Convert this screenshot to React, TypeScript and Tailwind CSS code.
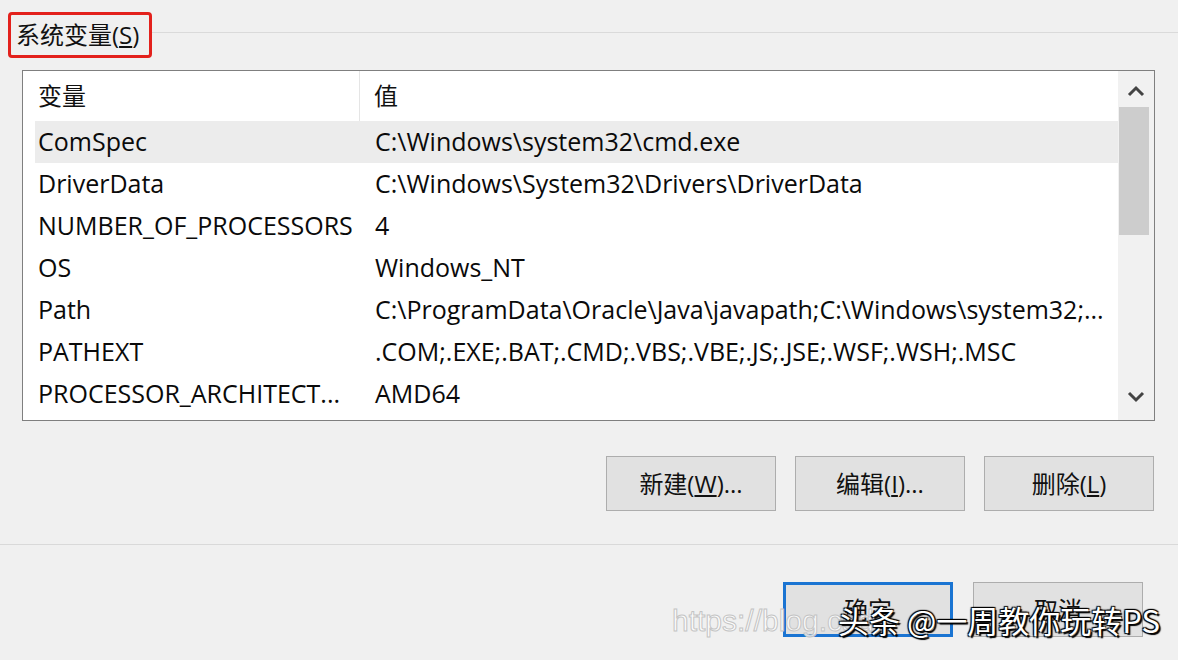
import React from "react";

const rows = [
  { name: "ComSpec", value: "C:\\Windows\\system32\\cmd.exe" },
  { name: "DriverData", value: "C:\\Windows\\System32\\Drivers\\DriverData" },
  { name: "NUMBER_OF_PROCESSORS", value: "4" },
  { name: "OS", value: "Windows_NT" },
  { name: "Path", value: "C:\\ProgramData\\Oracle\\Java\\javapath;C:\\Windows\\system32;..." },
  { name: "PATHEXT", value: ".COM;.EXE;.BAT;.CMD;.VBS;.VBE;.JS;.JSE;.WSF;.WSH;.MSC" },
  { name: "PROCESSOR_ARCHITECT...", value: "AMD64" },
];

const font = "font-['Open_Sans','Noto_Sans_CJK_SC',sans-serif]";

function Chevron({ up }: { up?: boolean }) {
  return (
    <svg width="18" height="12" viewBox="0 0 18 12" className="text-[#444]">
      <path
        d={up ? "M2 10 L9 3 L16 10" : "M2 2 L9 9 L16 2"}
        fill="none"
        stroke="currentColor"
        strokeWidth="3"
      />
    </svg>
  );
}

function Button({ label, primary }: { label: React.ReactNode; primary?: boolean }) {
  return (
    <div
      className={
        "w-[170px] h-[55px] flex items-center justify-center bg-[#e1e1e1] text-[24px] text-[#111] " +
        (primary ? "border-[3px] border-[#1a74d2]" : "border border-[#adadad]")
      }
    >
      {label}
    </div>
  );
}

export default function App() {
  return (
    <div className={`relative w-[1178px] h-[660px] overflow-hidden bg-[#f0f0f0] ${font}`}>
      {/* group header */}
      <div className="flex items-center pt-[12px] pl-[8px]">
        <div className="w-[144px] h-[46px] border-[3px] border-[#e3211c] rounded-[4px] flex items-center pl-[5px] text-[24px] text-[#111] leading-none">
          系统变量(<span className="underline underline-offset-2">S</span>)
        </div>
        <div className="flex-1 h-px bg-[#dadada] -mt-[6px]" />
      </div>

      {/* list view */}
      <div className="ml-[22px] mt-[12px] w-[1133px] h-[351px] border border-[#7f7f7f] bg-white flex">
        <div className="flex-1 flex flex-col">
          <div className="h-[50px] flex items-center text-[24px] text-[#111]">
            <div className="w-[337px] pl-[15px] h-full flex items-center border-r border-[#e5e5e5]">变量</div>
            <div className="pl-[14px]">值</div>
          </div>
          {rows.map((r, i) => (
            <div
              key={r.name}
              className={
                "ml-[12px] h-[42px] flex items-center text-[25px] text-[#0a0a0a] whitespace-nowrap " +
                (i === 0 ? "bg-[#ececec]" : "")
              }
            >
              <div className="w-[340px] pl-[3px]">{r.name}</div>
              <div>{r.value}</div>
            </div>
          ))}
        </div>
        <div className="w-[36px] bg-[#f1f1f1] flex flex-col items-center">
          <div className="h-[36px] flex items-center justify-center pt-[4px]">
            <Chevron up />
          </div>
          <div className="w-[30px] h-[128px] bg-[#cdcdcd] -ml-[4px]" />
          <div className="flex-1" />
          <div className="h-[40px] flex items-center justify-center pb-[6px]">
            <Chevron />
          </div>
        </div>
      </div>

      {/* action buttons */}
      <div className="mt-[35px] pr-[24px] flex justify-end gap-[19px]">
        <Button label={<>新建(<span className="underline">W</span>)...</>} />
        <Button label={<>编辑(<span className="underline">I</span>)...</>} />
        <Button label={<>删除(<span className="underline">L</span>)</>} />
      </div>

      <div className="mt-[33px] h-px bg-[#d9d9d9]" />

      <div className="mt-[37px] pr-[35px] flex justify-end gap-[20px]">
        <Button primary label="确定" />
        <Button label="取消" />
      </div>

      {/* watermarks */}
      <div className="absolute left-[672px] top-[606px] text-[30px] leading-none text-white/80 [-webkit-text-stroke:1px_#c4c4c4] font-['Liberation_Sans',sans-serif] whitespace-nowrap">
        https://blog.csdn
      </div>
      <div className="absolute left-[838px] top-[604px] text-[31px] leading-none text-white font-['Noto_Sans_CJK_SC',sans-serif] whitespace-nowrap [text-shadow:2px_2px_1px_#000,-1px_-1px_1px_#000,1px_-1px_1px_#000,-1px_1px_1px_#000]">
        头条 @一周教你玩转PS
      </div>
    </div>
  );
}
